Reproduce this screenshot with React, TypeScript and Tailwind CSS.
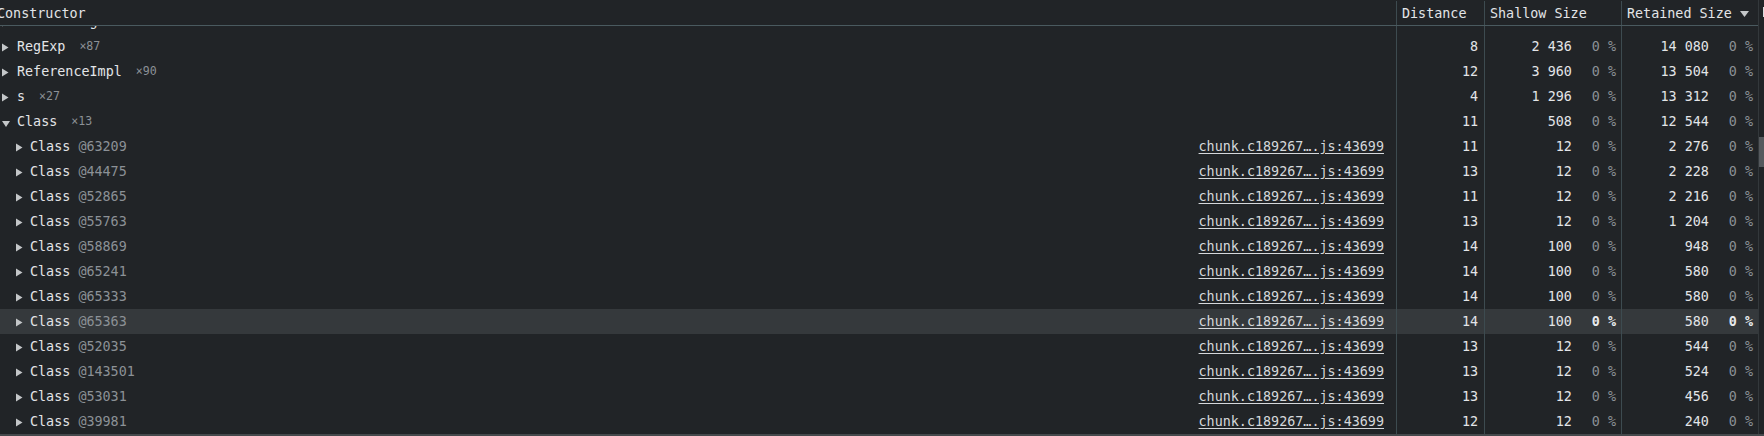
import React from 'react';

type Row = {
  depth: 0 | 1;
  name: string;
  tag: string;
  open?: boolean;
  distance: number;
  shallow: string;
  retained: string;
  selected?: boolean;
};

const LINK = 'chunk.c189267….js:43699';

const rows: Row[] = [
  { depth: 0, name: 'Formatting', tag: '×41', distance: 9, shallow: '1 312', retained: '14 616' },
  { depth: 0, name: 'RegExp', tag: '×87', distance: 8, shallow: '2 436', retained: '14 080' },
  { depth: 0, name: 'ReferenceImpl', tag: '×90', distance: 12, shallow: '3 960', retained: '13 504' },
  { depth: 0, name: 's', tag: '×27', distance: 4, shallow: '1 296', retained: '13 312' },
  { depth: 0, name: 'Class', tag: '×13', open: true, distance: 11, shallow: '508', retained: '12 544' },
  { depth: 1, name: 'Class', tag: '@63209', distance: 11, shallow: '12', retained: '2 276' },
  { depth: 1, name: 'Class', tag: '@44475', distance: 13, shallow: '12', retained: '2 228' },
  { depth: 1, name: 'Class', tag: '@52865', distance: 11, shallow: '12', retained: '2 216' },
  { depth: 1, name: 'Class', tag: '@55763', distance: 13, shallow: '12', retained: '1 204' },
  { depth: 1, name: 'Class', tag: '@58869', distance: 14, shallow: '100', retained: '948' },
  { depth: 1, name: 'Class', tag: '@65241', distance: 14, shallow: '100', retained: '580' },
  { depth: 1, name: 'Class', tag: '@65333', distance: 14, shallow: '100', retained: '580' },
  { depth: 1, name: 'Class', tag: '@65363', distance: 14, shallow: '100', retained: '580', selected: true },
  { depth: 1, name: 'Class', tag: '@52035', distance: 13, shallow: '12', retained: '544' },
  { depth: 1, name: 'Class', tag: '@143501', distance: 13, shallow: '12', retained: '524' },
  { depth: 1, name: 'Class', tag: '@53031', distance: 13, shallow: '12', retained: '456' },
  { depth: 1, name: 'Class', tag: '@39981', distance: 12, shallow: '12', retained: '240' },
];

function Caret({ open }: { open?: boolean }) {
  if (open) {
    return (
      <svg width="8" height="6" viewBox="0 0 8 6" className="mt-[4px]">
        <polygon points="0,0 8,0 4,6" fill="#c4c7c9" />
      </svg>
    );
  }
  return (
    <svg width="7" height="9" viewBox="0 0 7 9" className="mt-[2px]">
      <polygon points="0,0.5 6.5,4.5 0,8.5" fill="#c4c7c9" />
    </svg>
  );
}

function SizeCell({ value, selected }: { value: string; selected?: boolean }) {
  return (
    <div className="w-[137px] shrink-0 border-l border-[#3d4b50] flex justify-end pr-[5px]">
      <span className="text-[#e3e5e8]">{value}</span>
      <span className={`ml-[20px] w-[3ch] text-right ${selected ? 'text-[#e8eaed] font-bold' : 'text-[#8c9196]'}`}>0 %</span>
    </div>
  );
}

function TreeRow({ row }: { row: Row }) {
  const child = row.depth === 1;
  return (
    <div className={`flex h-[25px] leading-[25px] ${row.selected ? 'bg-[#35393c]' : ''}`}>
      <div className={`flex-1 min-w-0 flex items-center ${child ? 'pl-[16px]' : 'pl-[2px]'}`}>
        <div className={`${child ? 'w-[14px]' : 'w-[15px]'} shrink-0 flex`}>
          <Caret open={row.open} />
        </div>
        <span className="text-[#e3e5e8] whitespace-pre">{row.name}</span>
        {child ? (
          <span className="text-[#8c9196] whitespace-pre"> {row.tag}</span>
        ) : (
          <span className="ml-[14px] text-[11.6px] text-[#8c9196]">{row.tag}</span>
        )}
        {child && (
          <span className="ml-auto pr-[12px] text-[#d5d8db] underline underline-offset-2">{LINK}</span>
        )}
      </div>
      <div className="w-[88px] shrink-0 border-l border-[#3d4b50] text-right pr-[6px] text-[#e3e5e8]">
        {row.distance}
      </div>
      <SizeCell value={row.shallow} selected={row.selected} />
      <SizeCell value={row.retained} selected={row.selected} />
    </div>
  );
}

export default function App() {
  return (
    <div className="w-[1764px] h-[436px] overflow-hidden bg-[#212427] font-['DejaVu_Sans_Mono',monospace] text-[13.4px] flex flex-col">
      <div className="flex flex-1 min-h-0">
        <div className="flex-1 min-w-0 flex flex-col">
          {/* Header */}
          <div className="flex h-[26px] leading-[25px] pt-[1px] border-b border-[#4a5a5f] text-[#e3e5e8] bg-[#212427] relative z-10">
            <div className="flex-1 min-w-0 ml-[-3px]">Constructor</div>
            <div className="w-[88px] shrink-0 border-l border-[#3d4b50] pl-[5px]">Distance</div>
            <div className="w-[137px] shrink-0 border-l border-[#3d4b50] pl-[5px]">Shallow Size</div>
            <div className="w-[137px] shrink-0 border-l border-[#3d4b50] pl-[5px] flex items-center">
              <span>Retained Size</span>
              <svg width="9" height="6" viewBox="0 0 9 6" className="ml-[8px] mt-[1px]">
                <polygon points="0,0 9,0 4.5,6" fill="#c4c7c9" />
              </svg>
            </div>
          </div>
          {/* Body */}
          <div className="flex-1 min-h-0 overflow-hidden">
            <div className="-mt-[17px]">
              {rows.map((r, i) => (
                <TreeRow key={i} row={r} />
              ))}
            </div>
          </div>
        </div>
        {/* Scrollbar */}
        <div className="w-[6px] shrink-0 border-l border-[#33383b] flex flex-col">
          <div className="h-[7px]" />
          <div className="h-[10px] w-[1px] ml-auto bg-[#d8dadc]" />
          <div className="h-[120px]" />
          <div className="h-[30px] bg-[#55595d]" />
        </div>
      </div>
      <div className="h-[2px] bg-[#45494c]" />
    </div>
  );
}
